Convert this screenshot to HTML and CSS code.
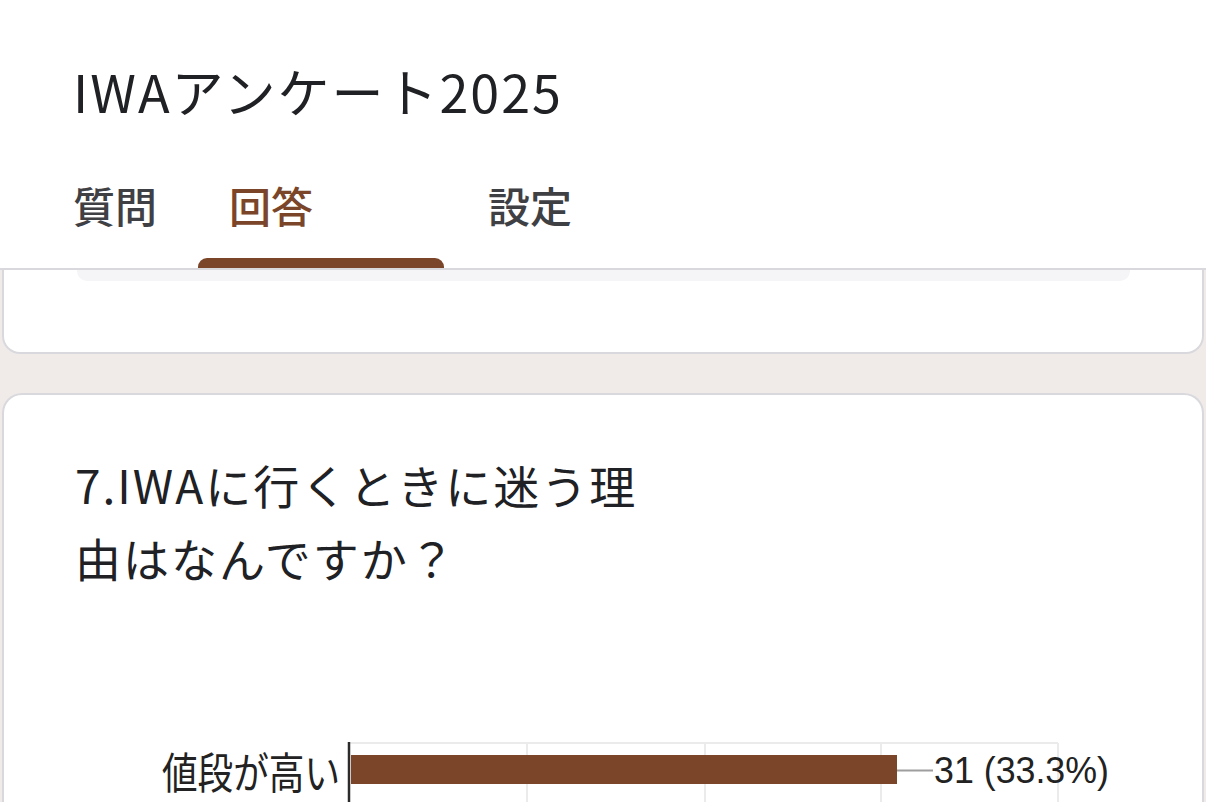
FILE: index.html
```html
<!DOCTYPE html>
<html lang="ja">
<head>
<meta charset="utf-8">
<title>IWAアンケート2025</title>
<link rel="stylesheet" href="styles.css">
</head>
<body>
<header class="header">
  <h1 class="title">IWAアンケート2025</h1>
  <nav class="tabs">
    <span class="tab tab-q">質問</span>
    <span class="tab tab-a active">回答</span>
    <span class="tab tab-s">設定</span>
  </nav>
  <div class="indicator"></div>
</header>
<main class="content">
  <section class="card card-prev">
    <div class="strip"></div>
  </section>
  <section class="card card-q">
    <h2 class="question">7.IWAに行くときに迷う理由はなんですか？</h2>
    <svg class="chart" width="1198" height="72" viewBox="0 0 1198 72" xmlns="http://www.w3.org/2000/svg">
      <g stroke="#ebebeb" stroke-width="2">
        <line x1="345" y1="13" x2="1054" y2="13"/>
        <line x1="523" y1="13" x2="523" y2="72"/>
        <line x1="701" y1="13" x2="701" y2="72"/>
        <line x1="877" y1="13" x2="877" y2="72"/>
        <line x1="1054" y1="13" x2="1054" y2="72"/>
      </g>
      <rect x="347" y="25" width="546" height="29" fill="#7a4529"/>
      <line x1="893" y1="40.5" x2="929" y2="40.5" stroke="#9e9e9e" stroke-width="2"/>
      <line x1="345" y1="12" x2="345" y2="72" stroke="#2b2b2b" stroke-width="2.5"/>
      <text class="lbl" x="336" y="59" text-anchor="end" textLength="178" lengthAdjust="spacingAndGlyphs">値段が高い</text>
      <text class="val" x="930" y="53" textLength="175" lengthAdjust="spacingAndGlyphs">31 (33.3%)</text>
    </svg>
  </section>
</main>
</body>
</html>
```
FILE: styles.css
```css
* { box-sizing: border-box; }
html, body { margin: 0; padding: 0; }
body {
  background: #f0ebe8;
  font-family: "Noto Sans CJK JP", "Noto Sans", sans-serif;
  color: #202124;
  width: 1206px;
  height: 802px;
  overflow: hidden;
}
.header {
  background: #fff;
  padding-top: 61px;
  border-bottom: 2px solid #d9d9dd;
}
.title {
  margin: 0;
  padding-left: 73px;
  font-size: 52px;
  line-height: 60px;
  letter-spacing: 2px;
  font-weight: 400;
  color: #202124;
}
.tabs {
  display: flex;
  margin-top: 59px;
  height: 50px;
  padding-left: 73px;
}
.tab {
  font-size: 42px;
  line-height: 50px;
  font-weight: 500;
  color: #3f4044;
}
.tab-a { margin-left: 72px; }
.tab-s { margin-left: 175px; }
.tab.active { color: #7a4529; }
.indicator {
  margin-top: 28px;
  margin-left: 198px;
  width: 246px;
  height: 10px;
  background: #7a4529;
  border-radius: 9px 9px 0 0;
}
.content { padding: 0 2px; }
.card {
  background: #fff;
  border: 2px solid #d9d9dd;
}
.card-prev {
  border-top: none;
  border-radius: 0 0 18px 18px;
  height: 84px;
  padding: 0 72px 0 73px;
}
.strip {
  height: 11px;
  background: #f5f5f7;
  border-radius: 0 0 10px 10px;
}
.card-q {
  margin-top: 39px;
  border-radius: 20px 20px 0 0;
  border-bottom: none;
  padding-top: 53px;
  height: 409px;
}
.question {
  margin: 0;
  padding-left: 71px;
  width: 660px;
  font-size: 46px;
  line-height: 73px;
  letter-spacing: 2px;
  font-weight: 400;
  color: #202124;
}
.chart {
  display: block;
  margin-top: 136px;
}
.lbl {
  font-family: "Noto Sans CJK JP", sans-serif;
  font-size: 43px;
  fill: #222;
}
.val {
  font-family: "Liberation Sans", Arial, sans-serif;
  font-size: 37px;
  fill: #222;
}
```
